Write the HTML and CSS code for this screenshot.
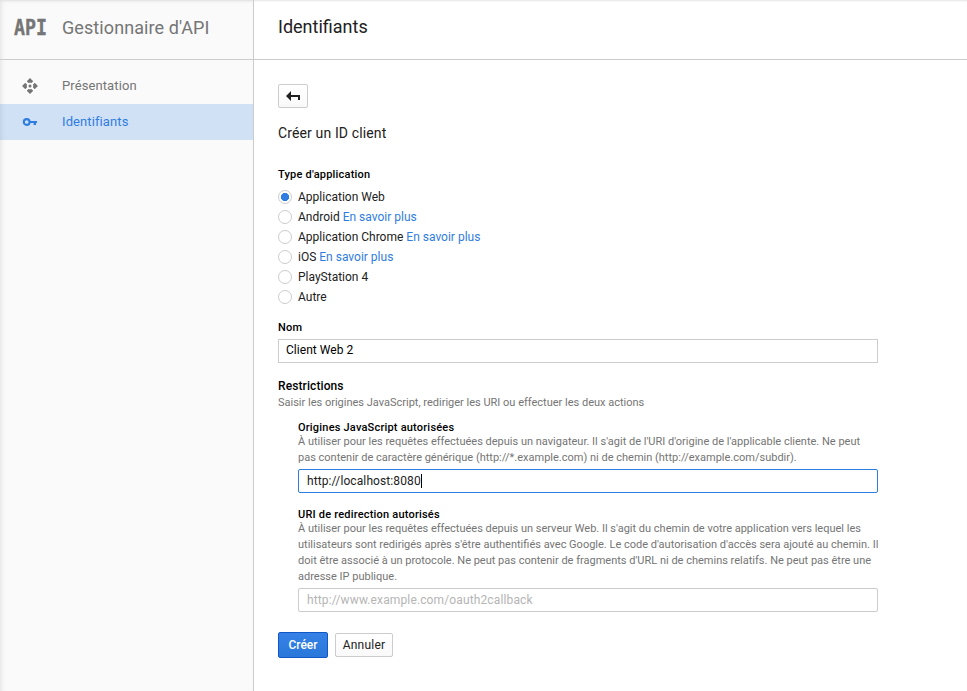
FILE: index.html
```html
<!DOCTYPE html>
<html lang="fr">
<head>
<meta charset="utf-8">
<title>Gestionnaire d'API</title>
<link rel="stylesheet" href="styles.css">
</head>
<body>
<div class="app">
  <aside class="sidebar">
    <div class="brand">
      <span class="brand-logo"><span class="brand-mark">API</span></span>
      <span class="brand-name">Gestionnaire d'API</span>
    </div>
    <nav class="nav">
      <a class="nav-item">
        <svg class="nav-icon" viewBox="0 0 16 16" width="16" height="16" fill="#757575"><path d="M8 .3 11 3.3 9.6 4.8 8 3.2 6.4 4.8 5 3.3ZM8 15.7 5 12.7 6.4 11.2 8 12.8 9.6 11.2 11 12.7ZM.3 8 3.3 5 4.8 6.4 3.2 8 4.8 9.6 3.3 11ZM15.7 8 12.7 11 11.2 9.6 12.8 8 11.2 6.4 12.7 5Z"/><path d="M8 .3 11 3.3 9.6 4.8H6.4L5 3.3ZM8 15.7 5 12.7 6.4 11.2H9.6L11 12.7ZM.3 8 3.3 5 4.8 6.4V9.6L3.3 11ZM15.7 8 12.7 11 11.2 9.6V6.4L12.7 5Z"/><circle cx="8" cy="8" r="1.5"/></svg>
        <span>Présentation</span>
      </a>
      <a class="nav-item active">
        <svg class="nav-icon" viewBox="0 0 16 16" width="16" height="16"><circle cx="4.7" cy="8" r="2.9" fill="none" stroke="#2f7de1" stroke-width="2.1"/><path d="M8 7H15V9H14V11H11.6V9H8Z" fill="#2f7de1"/></svg>
        <span>Identifiants</span>
      </a>
    </nav>
  </aside>
  <main class="main">
    <header class="topbar"><h1>Identifiants</h1></header>
    <div class="content">
      <button class="btn back" aria-label="Retour"><svg viewBox="0 0 14 10" width="14" height="10"><path d="M0 5 5 0V3.9H14V9H12V6H5V10Z" fill="#212121"/></svg></button>
      <h2>Créer un ID client</h2>
      <div class="label types-label">Type d'application</div>
      <div class="types">
        <label class="type"><span class="radio checked"></span><span>Application Web</span></label>
        <label class="type"><span class="radio"></span><span>Android <a>En savoir plus</a></span></label>
        <label class="type"><span class="radio"></span><span>Application Chrome <a>En savoir plus</a></span></label>
        <label class="type"><span class="radio"></span><span>iOS <a>En savoir plus</a></span></label>
        <label class="type"><span class="radio"></span><span>PlayStation 4</span></label>
        <label class="type"><span class="radio"></span><span>Autre</span></label>
      </div>
      <div class="label name-label">Nom</div>
      <div class="field name-field">Client Web 2</div>
      <div class="label restrictions">Restrictions</div>
      <p class="hint">Saisir les origines JavaScript, rediriger les URI ou effectuer les deux actions</p>
      <section class="group">
        <div class="label">Origines JavaScript autorisées</div>
        <p class="hint">À utiliser pour les requêtes effectuées depuis un navigateur. Il s'agit de l'URI d'origine de l'applicable cliente. Ne peut<br>pas contenir de caractère générique (http://*.example.com) ni de chemin (http://example.com/subdir).</p>
        <div class="field focused"><span>http://localhost:8080</span><i class="caret"></i></div>
      </section>
      <section class="group redirect">
        <div class="label">URI de redirection autorisés</div>
        <p class="hint">À utiliser pour les requêtes effectuées depuis un serveur Web. Il s'agit du chemin de votre application vers lequel les<br>utilisateurs sont redirigés après s'être authentifiés avec Google. Le code d'autorisation d'accès sera ajouté au chemin. Il<br>doit être associé à un protocole. Ne peut pas contenir de fragments d'URL ni de chemins relatifs. Ne peut pas être une<br>adresse IP publique.</p>
        <div class="field empty">http://www.example.com/oauth2callback</div>
      </section>
      <div class="actions">
        <button class="btn primary">Créer</button>
        <button class="btn cancel">Annuler</button>
      </div>
    </div>
  </main>
</div>
</body>
</html>
```
FILE: styles.css
```css
* { box-sizing: border-box; }
body { margin: 0; font: 12px/20px Roboto, sans-serif; color: #212121; background: #fff; }
h1, h2, p { margin: 0; font-weight: 400; }
.app { display: flex; width: 967px; height: 691px; overflow: hidden; box-shadow: inset 0 2px 2px -1px #e4e4e4; }
.sidebar { width: 254px; flex: none; background: #fafafa; border-right: 1px solid #ccc; box-shadow: inset 5px 0 5px -4px #e0e0e0, inset 0 3px 3px -2px #ddd; }
.brand { display: flex; height: 60px; padding: 0 0 4px 14px; align-items: center; border-bottom: 1px solid #ccc; color: #757575; }
.brand-logo { width: 48px; }
.brand-mark { display: inline-block; margin-top: 2px; font: bold 22px/24px "DejaVu Sans Mono", monospace; -webkit-text-stroke: .4px #757575; transform: scaleX(.83); transform-origin: 0 50%; }
.brand-name { font-size: 18px; letter-spacing: .09px; }
.nav { padding-top: 8px; }
.nav-item { display: flex; align-items: center; height: 36px; padding-left: 22px; gap: 24px; font-size: 13px; letter-spacing: .1px; color: #757575; }
.nav-item.active { background: rgba(47, 125, 225, .2); color: #2f7de1; }
.nav-icon { display: block; }
.main { flex: 1; }
.topbar { height: 60px; padding: 15px 24px; border-bottom: 1px solid #ccc; }
h1 { font-size: 18px; line-height: 24px; }
.content { padding: 24px 0 0 24px; width: 624px; }
.btn { display: flex; align-items: center; justify-content: center; margin: 0; padding: 0; height: 24px; border: 1px solid #ccc; border-radius: 2px; background: linear-gradient(#fff, #f9f9f9); font: 12px Roboto, sans-serif; letter-spacing: .2px; color: #212121; }
.back { width: 30px; }
h2 { margin-top: 15px; font-size: 14px; line-height: 20px; letter-spacing: .13px; }
.label { font-size: 11px; font-weight: 500; line-height: 16px; letter-spacing: .2px; color: #000; }
.types-label { margin-top: 24px; }
.types { margin-top: 4px; }
.type { display: flex; align-items: center; gap: 6px; height: 20px; }
.type a { color: #2f7de1; }
.radio { width: 14px; height: 14px; border: 1px solid #ccc; border-radius: 50%; }
.radio.checked { background: radial-gradient(circle, #2f7de1 3.8px, transparent 4.4px); }
.name-label { margin-top: 13px; }
.field { display: flex; align-items: center; height: 24px; padding: 0 8px; border: 1px solid #ccc; background: #fff; border-radius: 2px; letter-spacing: .1px; }
.name-field { margin-top: 3px; padding: 0 7px 2px; color: #000; border-radius: 0; letter-spacing: .03px; }
.restrictions { margin-top: 15px; font-size: 12px; letter-spacing: .1px; }
.hint { margin-top: 1px; font-size: 11px; line-height: 16px; color: #757575; white-space: nowrap; }
.group { margin: 9px 0 0 20px; }
.group .hint { margin-top: -2px; }
.group .field { margin-top: 3px; }
.group.redirect { margin-top: 14px; }
.group .focused { border-color: #2f7de1; }
.caret { width: 1px; height: 14px; background: #000; }
.group .empty { color: #b5b5b5; letter-spacing: .13px; }
.actions { display: flex; align-items: center; gap: 7px; margin-top: 20px; }
.primary { width: 50px; height: 26px; border-color: #1158c7; background: linear-gradient(#3581e6, #2b78da); color: #fff; font-weight: 500; letter-spacing: 0; }
.cancel { width: 58px; }
```
